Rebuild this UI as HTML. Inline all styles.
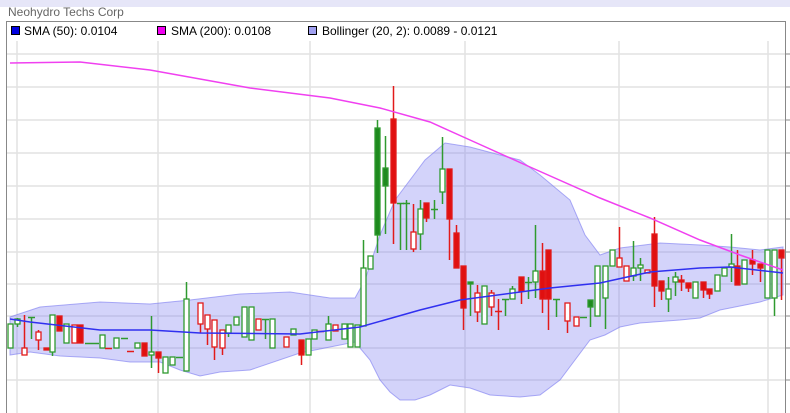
<!DOCTYPE html>
<html><head><meta charset="utf-8"><style>
body{margin:0;width:790px;height:413px;overflow:hidden;background:#fff;font-family:"Liberation Sans",sans-serif}
</style></head><body>
<svg id="s" width="790" height="413" xmlns="http://www.w3.org/2000/svg" style="position:absolute;left:0;top:0">
<rect x="0" y="0" width="790" height="7" fill="#e6e6f8"/>
<text x="8" y="16" font-size="12" fill="#666" font-family="Liberation Sans">Neohydro Techs Corp</text>
<g stroke="#e2e2e2" stroke-width="1.5">
<line x1="6" y1="54" x2="785" y2="54"/><line x1="6" y1="87" x2="785" y2="87"/><line x1="6" y1="120" x2="785" y2="120"/><line x1="6" y1="153" x2="785" y2="153"/><line x1="6" y1="186" x2="785" y2="186"/><line x1="6" y1="219" x2="785" y2="219"/><line x1="6" y1="252" x2="785" y2="252"/><line x1="6" y1="284" x2="785" y2="284"/><line x1="6" y1="316" x2="785" y2="316"/><line x1="6" y1="348" x2="785" y2="348"/><line x1="6" y1="380" x2="785" y2="380"/>
<line x1="17" y1="21" x2="17" y2="413"/><line x1="158" y1="21" x2="158" y2="413"/><line x1="310" y1="21" x2="310" y2="413"/><line x1="465" y1="21" x2="465" y2="413"/><line x1="619" y1="21" x2="619" y2="413"/><line x1="768" y1="21" x2="768" y2="413"/>
</g>
<rect x="6" y="21" width="779" height="20" fill="#fff"/>
<line x1="6" y1="21.5" x2="785" y2="21.5" stroke="#888"/>
<line x1="6.5" y1="21" x2="6.5" y2="413" stroke="#888"/>
<line x1="785.5" y1="21" x2="785.5" y2="413" stroke="#888"/>
<g stroke="#888"><line x1="785" y1="54" x2="790" y2="54"/><line x1="785" y1="87" x2="790" y2="87"/><line x1="785" y1="120" x2="790" y2="120"/><line x1="785" y1="153" x2="790" y2="153"/><line x1="785" y1="186" x2="790" y2="186"/><line x1="785" y1="219" x2="790" y2="219"/><line x1="785" y1="252" x2="790" y2="252"/><line x1="785" y1="284" x2="790" y2="284"/><line x1="785" y1="316" x2="790" y2="316"/><line x1="785" y1="348" x2="790" y2="348"/><line x1="785" y1="380" x2="790" y2="380"/></g>
<g font-size="12" font-family="Liberation Sans" fill="#000">
<rect x="11.5" y="26.5" width="8" height="8" fill="#0000e0" stroke="#000"/><text x="24" y="35">SMA (50): 0.0104</text>
<rect x="157.5" y="26.5" width="8" height="8" fill="#f000f0" stroke="#000"/><text x="171" y="35">SMA (200): 0.0108</text>
<rect x="308.5" y="26.5" width="8" height="8" fill="#a0a0f0" stroke="#000"/><text x="322" y="35">Bollinger (20, 2): 0.0089 - 0.0121</text>
</g>
<path fill="rgba(130,130,240,0.35)" stroke="rgba(120,120,240,0.6)" d="M10,317 L40,307 100,302 150,304 190,300 240,294 290,292 330,298 355,298 365,280 380,235 395,200 410,180 425,160 445,143 470,147 500,155 520,160 540,175 570,200 585,235 600,255 620,248 660,243 700,245 730,247 760,250 783,247 L783,295 760,302 720,310 700,318 680,320 640,323 620,327 605,335 590,340 575,360 560,380 540,395 520,397 490,395 470,388 450,385 430,395 415,400 400,400 390,392 380,380 370,360 355,342 330,347 300,353 250,370 220,372 200,376 180,370 160,362 130,362 100,358 60,356 30,352 10,355Z"/>
<g id="c"></g>
<polyline fill="none" stroke="#3030f0" stroke-width="1.5" points="10,319 30,322 100,330 150,330 200,333 300,334 360,327 420,310 460,300 550,288 600,283 650,272 700,268 730,267 783,273"/>
<polyline fill="none" stroke="#f040f0" stroke-width="1.5" points="10,63 80,62 150,70 250,88 330,98 380,108 430,122 470,140 530,167 600,198 650,218 700,240 740,255 783,270"/>
</svg>
<script>
var d=[[10,324,348,324,348,'g'],[17,319,324,318,327,'g'],[24,348,355,315,355,'r'],[31,317,318,317,339,'g'],[38,332,340,330,350,'r'],[46,348,350,348,350,'R'],[52,315,352,315,356,'g'],[59,316,331,316,331,'R'],[66,324,343,324,343,'g'],[74,325,343,325,343,'r'],[80,325,343,325,343,'R'],[88,343,344,343,344,'g'],[95,343,344,343,344,'g'],[102,335,348,335,348,'g'],[108,348,349,348,349,'r'],[116,338,348,338,348,'g'],[124,338,339,338,339,'g'],[130,351,352,351,352,'r'],[137,343,348,343,348,'g'],[144,343,356,343,356,'R'],[151,352,355,316,368,'g'],[158,352,358,352,373,'R'],[165,357,373,357,373,'g'],[172,357,365,357,365,'g'],[179,357,358,357,358,'g'],[186,299,371,282,371,'g'],[200,303,324,303,333,'r'],[207,315,329,315,345,'r'],[214,320,347,320,360,'r'],[222,330,348,330,355,'r'],[228,325,333,325,337,'g'],[236,317,325,317,325,'g'],[244,307,337,307,337,'g'],[251,307,340,307,340,'g'],[258,319,330,319,330,'r'],[265,319,320,319,339,'g'],[272,319,348,319,348,'g'],[286,337,347,337,347,'r'],[293,329,335,329,335,'g'],[301,340,355,340,365,'R'],[308,339,355,339,355,'g'],[314,330,339,330,339,'g'],[320,331,332,331,332,'r'],[328,324,340,316,340,'g'],[335,325,331,325,331,'r'],[344,324,339,324,339,'g'],[350,324,347,324,347,'g'],[357,325,347,325,347,'g'],[363,268,326,240,326,'g'],[370,256,269,256,269,'g'],[377,128,235,120,253,'G'],[385,168,186,136,234,'G'],[393,119,203,86,244,'R'],[400,203,204,203,250,'g'],[406,203,204,200,250,'g'],[413,232,249,204,252,'r'],[420,209,234,200,250,'g'],[426,203,218,203,222,'R'],[434,209,210,200,219,'g'],[442,169,192,137,204,'g'],[449,169,219,169,260,'R'],[456,233,268,225,268,'R'],[463,266,308,266,330,'R'],[470,282,284,282,316,'G'],[477,293,312,285,322,'r'],[484,286,324,286,324,'g'],[491,293,307,290,316,'r'],[498,311,312,299,330,'r'],[505,299,300,299,316,'g'],[512,289,299,286,299,'g'],[521,277,291,277,304,'R'],[528,282,283,277,299,'g'],[535,271,282,225,298,'g'],[542,271,299,243,313,'R'],[548,250,299,250,330,'R'],[556,299,300,299,317,'g'],[567,303,321,303,333,'r'],[576,317,326,317,326,'r'],[583,317,318,317,318,'g'],[590,300,307,300,327,'G'],[597,266,316,266,316,'g'],[605,266,298,266,329,'g'],[612,250,266,250,266,'g'],[619,258,267,227,267,'r'],[626,266,281,266,281,'r'],[633,268,276,241,281,'g'],[640,265,268,258,281,'g'],[647,270,273,270,273,'r'],[654,234,286,217,307,'R'],[661,281,291,281,300,'R'],[668,289,299,277,312,'g'],[675,277,282,272,296,'g'],[681,280,282,275,291,'R'],[688,283,288,283,292,'R'],[695,282,298,282,298,'g'],[703,282,290,282,298,'R'],[709,289,294,289,299,'R'],[717,275,291,275,291,'g'],[724,268,276,268,276,'g'],[731,264,267,234,282,'g'],[737,266,285,250,285,'R'],[744,260,284,260,284,'g'],[752,260,264,250,275,'R'],[760,264,268,264,282,'R'],[767,250,298,250,298,'g'],[774,250,298,250,316,'g'],[781,250,258,250,300,'R']];
var h='';d.forEach(function(c){var x=c[0],t=c[5];var col=(t=='g'||t=='G')?'#2f9a2f':'#e21a1a';var fill=(t=='G')?'#1e8a1e':(t=='R'?'#e01010':'#fff');
h+='<line x1="'+(x+.5)+'" y1="'+c[3]+'" x2="'+(x+.5)+'" y2="'+c[4]+'" stroke="'+col+'" stroke-width="1.5"/>';
var bh=c[2]-c[1];if(bh<2){h+='<line x1="'+(x-3)+'" y1="'+c[1]+'.5" x2="'+(x+4)+'" y2="'+c[1]+'.5" stroke="'+col+'" stroke-width="1.5"/>';}
else h+='<rect x="'+(x-2)+'" y="'+c[1]+'" width="5" height="'+bh+'" fill="'+fill+'" stroke="'+col+'" stroke-width="1.3"/>';});
document.getElementById('c').innerHTML=h;
</script>
</body></html>
